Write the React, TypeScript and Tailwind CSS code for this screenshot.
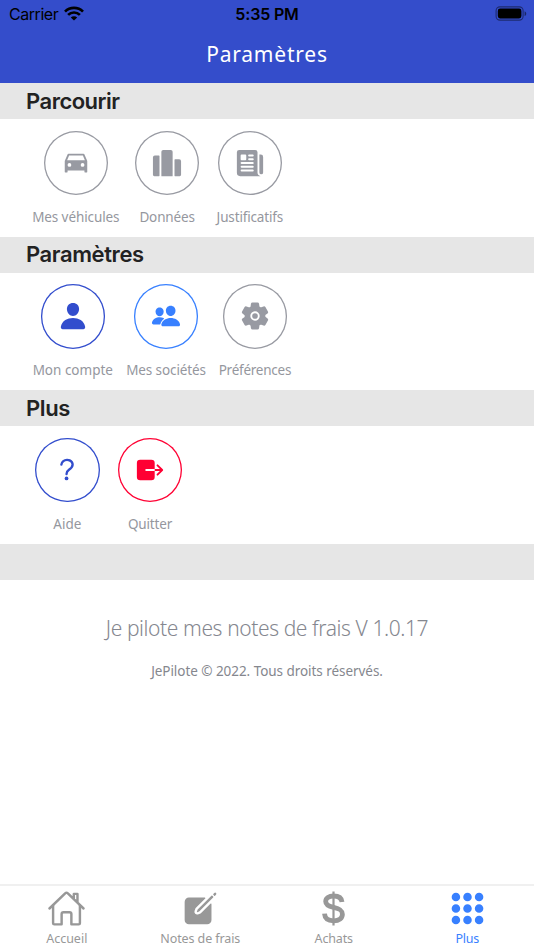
import React from 'react';
import { IconType } from 'react-icons';
import {
  IoApps,
  IoCarSharp,
  IoCreate,
  IoExit,
  IoHelp,
  IoHomeOutline,
  IoNewspaper,
  IoPeople,
  IoPerson,
  IoPodium,
  IoSettings,
} from 'react-icons/io5';

interface MenuItem {
  label: string;
  icon: IconType;
  color: string;
  width: string;
  tracking: string;
}

interface MenuSection {
  title: string;
  tracking: string;
  items: MenuItem[];
}

const GRAY = 'text-[#989aa2]';
const NAVY = 'text-[#324dcd]';
const BLUE = 'text-[#3880ff]';
const RED = 'text-[#ff0033]';

const sections: MenuSection[] = [
  {
    title: 'Parcourir',
    tracking: 'tracking-[-0.5px]',
    items: [
      { label: 'Mes véhicules', icon: IoCarSharp, color: GRAY, width: 'w-[87px]', tracking: 'tracking-[-0.1px]' },
      { label: 'Données', icon: IoPodium, color: GRAY, width: 'w-[70px]', tracking: 'tracking-[-0.15px]' },
      { label: 'Justificatifs', icon: IoNewspaper, color: GRAY, width: 'w-[70px]', tracking: 'tracking-[-0.15px]' },
    ],
  },
  {
    title: 'Paramètres',
    tracking: 'tracking-[-0.4px]',
    items: [
      { label: 'Mon compte', icon: IoPerson, color: NAVY, width: 'w-[81px]', tracking: 'tracking-[0px]' },
      { label: 'Mes sociétés', icon: IoPeople, color: BLUE, width: 'w-[80px]', tracking: 'tracking-[-0.1px]' },
      { label: 'Préférences', icon: IoSettings, color: GRAY, width: 'w-[72px]', tracking: 'tracking-[-0.25px]' },
    ],
  },
  {
    title: 'Plus',
    tracking: 'tracking-[-0.4px]',
    items: [
      { label: 'Aide', icon: IoHelp, color: NAVY, width: 'w-[70px]', tracking: 'tracking-[0px]' },
      { label: 'Quitter', icon: IoExit, color: RED, width: 'w-[70px]', tracking: 'tracking-[-0.15px]' },
    ],
  },
];

const StatusBar: React.FC = () => (
  <div className="relative h-7 flex items-center justify-between pl-[9px] pr-[7px] text-black font-['Inter'] text-[16px]">
    <div className="flex items-center gap-[6px]">
      <span className="tracking-[-0.45px]">Carrier</span>
      <svg width="20" height="15" viewBox="0 0 20 15" fill="none" stroke="currentColor" strokeWidth="2.7" className="-mt-[2px]">
        <path d="M1 5.6a12.8 12.8 0 0 1 18 0" />
        <path d="M4.1 8.9a8.4 8.4 0 0 1 11.8 0" />
        <path d="M10 14.6 6.8 11.5a4.6 4.6 0 0 1 6.4 0z" fill="currentColor" stroke="none" />
      </svg>
    </div>
    <span className="absolute left-1/2 -translate-x-1/2 font-semibold whitespace-nowrap tracking-[-0.15px]">5:35 PM</span>
    <svg width="32" height="15" viewBox="0 0 32 15" className="-mt-[1px]">
      <rect x="1.1" y="0.9" width="27" height="13.2" rx="3.8" fill="none" stroke="#000" strokeOpacity="0.45" strokeWidth="1.1" />
      <rect x="2.8" y="2.6" width="23.6" height="9.8" rx="2.3" />
      <path d="M29.6 5.2c2.2.8 2.2 4 0 4.8z" fillOpacity="0.5" />
    </svg>
  </div>
);

const DollarIcon: React.FC = () => (
  <svg width="39" height="39" viewBox="0 0 39 39" fill="none" stroke="currentColor">
    <path d="M19.5 2.5v34" strokeWidth="2.2" />
    <path
      d="M28 13c-.4-4.1-3.4-6-8.4-6-4.8 0-7.9 2-7.9 5.4 0 3.6 2.8 4.8 8 5.9 5.8 1.2 8.7 2.8 8.7 7 0 4.1-3.3 6.5-8.7 6.5-5.6 0-8.9-2.5-9.2-7.1"
      strokeWidth="4.8"
    />
  </svg>
);

const App: React.FC = () => {
  return (
    <div className="w-full h-screen flex flex-col bg-white overflow-hidden font-['Noto_Sans',sans-serif]">
      <header className="h-[83px] shrink-0 bg-[#344dcb]">
        <StatusBar />
        <h1 className="h-[54px] flex items-center justify-center text-white text-[21px] tracking-[0.8px]">Paramètres</h1>
      </header>

      <main className="flex-1 min-h-0">
        {sections.map(section => (
          <section key={section.title} className="h-[153.5px]">
            <h2 className={`h-9 bg-[#e6e6e6] pl-[26px] flex items-center font-['Inter'] font-semibold text-[22px] text-[#222] ${section.tracking}`}>
              {section.title}
            </h2>
            <div className="flex gap-[12.8px] pl-[32.3px] pt-[11.6px]">
              {section.items.map(item => (
                <div key={item.label} className={`flex flex-col items-center ${item.width}`}>
                  <div className={`size-[64.6px] rounded-full shadow-[inset_0_0_0_1.3px_currentColor] flex items-center justify-center ${item.color}`}>
                    <item.icon size={30} />
                  </div>
                  <span className={`mt-[11.8px] text-[13.5px] leading-5 whitespace-nowrap text-[#95979e] ${item.tracking}`}>
                    {item.label}
                  </span>
                </div>
              ))}
            </div>
          </section>
        ))}
        <div className="h-9 bg-[#e6e6e6]" />

        <div className="flex flex-col items-center whitespace-nowrap">
          <p className="mt-[33px] text-[21px] leading-[30px] font-light tracking-[-0.4px] text-[#85878f]">
            Je pilote mes notes de frais V 1.0.17
          </p>
          <p className="mt-[18px] text-[13.5px] leading-5 tracking-[-0.05px] text-[#85878e]">JePilote © 2022. Tous droits réservés.</p>
        </div>
      </main>

      <nav className="h-[66px] shrink-0 border-t-2 border-[#f0f0f0] grid grid-cols-4 text-[#989898] text-[12.5px]">
        <a className="flex flex-col items-center pt-[3px]">
          <IoHomeOutline size={39} />
          <span className="mt-px leading-5 tracking-[0px]">Accueil</span>
        </a>
        <a className="flex flex-col items-center pt-[3px]">
          <IoCreate size={39} />
          <span className="mt-px leading-5 tracking-[-0.1px]">Notes de frais</span>
        </a>
        <a className="flex flex-col items-center pt-[3px]">
          <DollarIcon />
          <span className="mt-px leading-5 tracking-[-0.15px]">Achats</span>
        </a>
        <a className="flex flex-col items-center pt-[3px] text-[#3880ff]">
          <IoApps size={39} />
          <span className="mt-px leading-5 tracking-[-0.3px]">Plus</span>
        </a>
      </nav>
    </div>
  );
};

export default App;
